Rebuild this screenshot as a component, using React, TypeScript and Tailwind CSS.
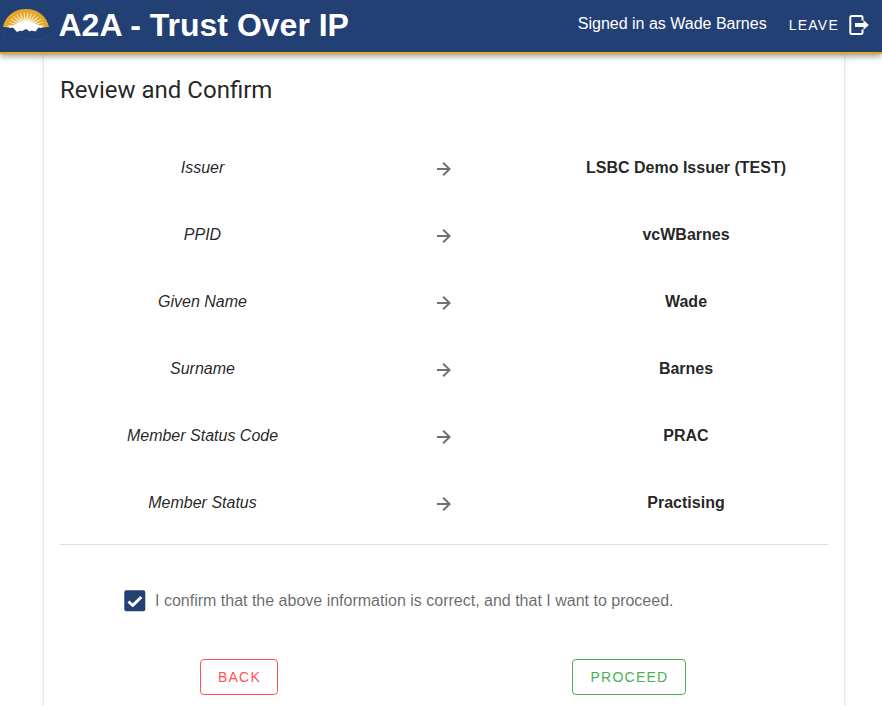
import React from "react";

const rows: [string, string][] = [
  ["Issuer", "LSBC Demo Issuer (TEST)"],
  ["PPID", "vcWBarnes"],
  ["Given Name", "Wade"],
  ["Surname", "Barnes"],
  ["Member Status Code", "PRAC"],
  ["Member Status", "Practising"],
];

// Angles, in degrees, of the pale rays that fan out from the middle of the sun.
const rays = [-79, -67, -55, -42, -30, -18, -6, 6, 18, 30, 42, 55, 67, 79];

function SunLogo() {
  return (
    <svg className="h-9 w-[50px] shrink-0" viewBox="0 0 50 36" aria-hidden="true">
      <path d="M3 19C5.500 8 14 1 26 1S46.500 8 49 19L42 19.500L38 19L14 19L10 19.500Z" fill="#e3a82b" />
      <g transform="translate(26 20) scale(1.2 1)">
        {rays.map((a) => (
          <path key={a} d="M-1.600 0L-.3 -15.500H.3L1.600 0Z" fill="#fff" opacity=".7" transform={`rotate(${a})`} />
        ))}
      </g>
      <path d="M6 18.500L12 18L16 16L19 14.500L22 14L26 12.500L30 14L33 14.500L36 16L40 18L46 18.500L43 18.800L41 20L38.500 19.500L35.500 23.500L31.500 22.500L29.500 23.500L26 20.500L22.500 23L20 22.800L17 24L13 19.500L10.500 20L8 19Z" fill="#fff" />
      <path d="M2.500 21V28C12 26 18 29 25 31C34 33 42 31 49 28" fill="none" stroke="#35558a" strokeWidth=".7" strokeDasharray="2 2" />
    </svg>
  );
}

export default function App() {
  return (
    <div className="flex h-[706px] w-full flex-col overflow-hidden bg-white font-['Liberation_Sans',Arial,sans-serif] text-base text-black/87">
      <header className="relative z-10 flex h-[54px] shrink-0 items-center border-b-2 border-[#e3a82b] bg-[#234075] pr-3 text-white shadow-[0_2px_4px_-1px_rgba(0,0,0,0.2),0_4px_5px_rgba(0,0,0,0.14),0_1px_10px_rgba(0,0,0,0.12)]">
        <SunLogo />
        <h1 className="ml-[8.5px] pb-[3px] text-[32px] leading-[44px] font-bold">A2A - Trust Over IP</h1>
        <span className="mr-[22px] ml-auto pb-1">Signed in as Wade Barnes</span>
        <span className="mr-[7px] pb-0.5 text-sm tracking-[1.25px]">LEAVE</span>
        <svg className="size-6 shrink-0" viewBox="0 0 24 24" fill="none" stroke="#fff" strokeWidth="2">
          <path d="M16.500 6.500V3.500Q16.500 2 15 2H5.800Q4.300 2 4.300 3.500V18.500Q4.300 20 5.800 20H15Q16.500 20 16.500 18.500V15.500" />
          <path d="M9 9H17.500V6L22.800 11L17.500 16V13H9Z" fill="#fff" stroke="none" />
        </svg>
      </header>
      <main className="ml-11 flex w-[800px] flex-1 flex-col bg-white px-4 shadow-[0_3px_1px_-2px_rgba(0,0,0,0.2),0_2px_2px_rgba(0,0,0,0.14),0_1px_5px_rgba(0,0,0,0.12)]">
        <h2 className="mt-5 font-[Roboto,sans-serif] text-2xl leading-8">Review and Confirm</h2>
        <div className="mt-[28px]">
          {rows.map(([label, value]) => (
            <div key={label} className="grid h-[67px] grid-cols-[284px_200px_284px] items-center text-center">
              <span className="pl-px italic">{label}</span>
              <svg className="mt-0.5 size-5 justify-self-center" viewBox="0 0 20 20" fill="#707070">
                <path d="M3 9V11H13.200L8.400 15.600L9.900 17L17 10L9.900 3L8.400 4.400L13.200 9Z" />
              </svg>
              <span className="font-bold">{value}</span>
            </div>
          ))}
        </div>
        <hr className="mt-2 border-black/12" />
        <label className="mt-[44px] ml-16 flex h-6 items-center text-black/60">
          <svg className="mr-[9px] size-[22px]" viewBox="0 0 22 22">
            <rect x=".3" y=".3" width="21" height="21" rx="2" fill="#234075" />
            <path d="M4.500 11.500L8.700 15.500L17.300 7" fill="none" stroke="#fff" strokeWidth="3" strokeLinejoin="round" />
          </svg>
          I confirm that the above information is correct, and that I want to proceed.
        </label>
        <div className="mt-[46px] flex">
          <button className="ml-[140px] h-9 w-[78px] rounded border border-[#ff5252] pl-px text-sm tracking-[1.25px] text-[#ff5252]">BACK</button>
          <button className="ml-[294px] h-9 w-[114px] rounded border border-[#4caf50] pl-px text-sm tracking-[1.25px] text-[#4caf50]">PROCEED</button>
        </div>
      </main>
    </div>
  );
}
